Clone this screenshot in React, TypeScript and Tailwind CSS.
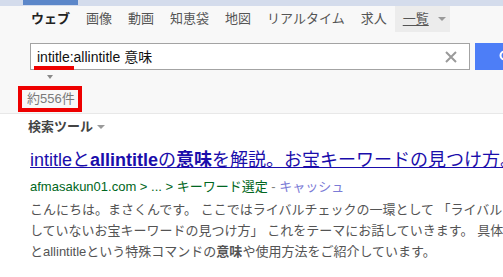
import React from "react";

const FONT = { fontFamily: '"Liberation Sans", Arial, "Noto Sans CJK JP", sans-serif' };

function Tab({ label, active }: { label: string; active?: boolean }) {
  return (
    <div
      className={
        "px-2 h-full flex items-center text-[13px] leading-[16px] " +
        (active ? "font-bold text-[#222]" : "text-[#555]")
      }
    >
      {label}
    </div>
  );
}

export default function App() {
  return (
    <div className="w-[503px] h-[277px] overflow-hidden bg-white relative" style={FONT}>
      {/* header */}
      <div className="bg-[#f8f8f8] border-b border-[#e8e8e8]">
        <div className="h-[6px] bg-[#d4dcec]">
          <div className="ml-[23px] w-[55px] h-[5px] bg-[#5c87c9]" />
        </div>
        <div className="h-[26px] flex pl-[23px]">
          <Tab label="ウェブ" active />
          <Tab label="画像" />
          <Tab label="動画" />
          <Tab label="知恵袋" />
          <Tab label="地図" />
          <Tab label="リアルタイム" />
          <Tab label="求人" />
          <div className="h-full flex items-center bg-[#ececec] pl-2 pr-[4px] text-[13px] leading-[16px] text-[#555]">
            <span className="underline underline-offset-2">一覧</span>
            <span className="ml-[9px] w-0 h-0 border-l-[4px] border-r-[4px] border-t-[4px] border-l-transparent border-r-transparent border-t-[#999]" />
          </div>
        </div>
        <div className="pt-[11px] flex h-[38px]">
          <div className="relative shrink-0 ml-[30px] w-[440px] h-[27px] border border-[#a3a3a3] bg-white flex items-center pl-[6px]">
            <span className="text-[14px] leading-[18px] text-[#111]">intitle:allintitle 意味</span>
            <svg className="absolute right-[12px] top-[7px]" width="12" height="12" viewBox="0 0 12 12">
              <path d="M1 1 L11 11 M11 1 L1 11" stroke="#9a9a9a" strokeWidth="2" />
            </svg>
            <div className="absolute left-[3px] top-[22px] w-[40px] h-[4px] bg-[#ee0000]" />
          </div>
          <div className="shrink-0 ml-[5px] w-[80px] h-[27px] bg-[#4d7ef7] flex items-center">
            <svg className="ml-[24px]" width="14" height="14" viewBox="0 0 14 14">
              <circle cx="5.5" cy="5.5" r="4" stroke="white" strokeWidth="2" fill="none" />
              <path d="M8.5 8.5 L13 13" stroke="white" strokeWidth="2" />
            </svg>
          </div>
        </div>
        <div className="mt-[5px] ml-[47px] w-0 h-0 border-l-[3px] border-r-[3px] border-t-[4px] border-l-transparent border-r-transparent border-t-[#8a8a8a]" />
        <div className="mt-[7px] ml-[18px] w-[64px] h-[26px] border-[4px] border-[#ee0000] flex items-center pl-[5px]">
          <span className="text-[13px] leading-[16px] text-[#7a7a7a]">約556件</span>
        </div>
        <div className="h-[1px]" />
      </div>

      {/* search tools */}
      <div className="pt-[4px] pl-[28px] flex items-center h-[21px]">
        <span className="text-[13px] leading-[17px] font-bold text-[#444]">検索ツール</span>
        <span className="ml-[4px] mt-[1px] w-0 h-0 border-l-[4px] border-r-[4px] border-t-[4px] border-l-transparent border-r-transparent border-t-[#9a9a9a]" />
      </div>

      {/* result */}
      <div className="mt-[14px] pl-[30px]">
        <div className="whitespace-nowrap text-[18px] leading-[22px] text-[#1a0dab] underline underline-offset-[1px]">
          intitleと<b>allintitle</b>の<b>意味</b>を解説。お宝キーワードの見つけ方。
        </div>
        <div className="mt-[7px] whitespace-nowrap text-[13px] leading-[18px] text-[#006621]">
          afmasakun01.com &gt; ... &gt; キーワード選定 <span className="text-[#808080]">-</span>{" "}
          <span className="text-[#7b7bd6]">キャッシュ</span>
        </div>
        <div className="mt-[3px] whitespace-nowrap text-[13px] leading-[21px] text-[#545454]">
          <div>こんにちは。まさくんです。 ここではライバルチェックの一環として 「ライバル</div>
          <div>していないお宝キーワードの見つけ方」 これをテーマにお話していきます。 具体</div>
          <div>
            とallintitleという特殊コマンドの<b>意味</b>や使用方法をご紹介しています。
          </div>
        </div>
      </div>
    </div>
  );
}
